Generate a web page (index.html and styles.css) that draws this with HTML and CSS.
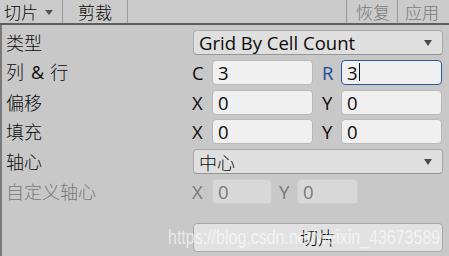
FILE: index.html
```html
<!DOCTYPE html>
<html>
<head>
<meta charset="utf-8">
<link rel="stylesheet" href="styles.css">
</head>
<body>
<div class="toolbar">
  <div class="tb-item tb-first">切片<span class="tb-caret"></span></div>
  <div class="tb-item">剪裁</div>
  <div class="tb-spacer"></div>
  <div class="tb-item tb-disabled">恢复</div>
  <div class="tb-item tb-disabled tb-last">应用</div>
</div>
<div class="panel">
  <div class="row">
    <div class="label">类型</div>
    <div class="content">
      <div class="dropdown"><span>Grid By Cell Count</span><span class="caret"></span></div>
    </div>
  </div>
  <div class="row">
    <div class="label">列<span class="amp">&amp;</span>行</div>
    <div class="content pair">
      <span class="axis">C</span><div class="field">3</div>
      <span class="axis axis2 blue">R</span><div class="field focus">3<span class="cursor"></span></div>
    </div>
  </div>
  <div class="row">
    <div class="label">偏移</div>
    <div class="content pair">
      <span class="axis">X</span><div class="field">0</div>
      <span class="axis axis2">Y</span><div class="field">0</div>
    </div>
  </div>
  <div class="row">
    <div class="label">填充</div>
    <div class="content pair">
      <span class="axis">X</span><div class="field">0</div>
      <span class="axis axis2">Y</span><div class="field">0</div>
    </div>
  </div>
  <div class="row">
    <div class="label">轴心</div>
    <div class="content">
      <div class="dropdown"><span class="cjk">中心</span><span class="caret"></span></div>
    </div>
  </div>
  <div class="row disabled">
    <div class="label">自定义轴心</div>
    <div class="content pair small">
      <span class="axis">X</span><div class="field">0</div>
      <span class="axis axis2">Y</span><div class="field">0</div>
    </div>
  </div>
  <div class="row button-row">
    <div class="label"></div>
    <div class="content">
      <div class="button">切片</div>
    </div>
  </div>
</div>
<div class="watermark">https://blog.csdn.net/weixin_43673589</div>
</body>
</html>
```

FILE: styles.css
```css
html, body {
  margin: 0;
  padding: 0;
}
body {
  width: 449px;
  height: 256px;
  overflow: hidden;
  background: #c8c8c8;
  font-family: "Open Sans", "Noto Sans CJK SC", sans-serif;
  color: #0c0c0c;
  position: relative;
}
.toolbar {
  display: flex;
  height: 23px;
  background: #cbcbcb;
  border-bottom: 2px solid #5e5e5e;
  font-family: "Noto Sans CJK SC", sans-serif;
  font-weight: 300;
  font-size: 17px;
  line-height: 23px;
}
.tb-item {
  display: flex;
  align-items: center;
  padding: 0 0 0 15px;
  width: 49px;
  border-right: 1px solid #9a9a9a;
  box-sizing: border-box;
}
.tb-first {
  width: 63px;
  padding-left: 4px;
}
.tb-item:nth-child(2) {
  width: 65px;
}
.tb-spacer {
  flex: 1;
  border-right: 1px solid #9a9a9a;
}
.tb-disabled {
  color: #7a7a7a;
  width: 51px;
  padding-left: 9px;
}
.tb-last {
  border-right: none;
  padding-left: 7px;
}
.tb-caret {
  display: inline-block;
  margin-left: 7px;
  margin-top: 2px;
  width: 0;
  height: 0;
  border-left: 4.5px solid transparent;
  border-right: 4.5px solid transparent;
  border-top: 5px solid #555;
}
.panel {
  border-left: 2px solid #7a7a7a;
  padding: 5px 0 0 4px;
  height: 226px;
  display: flex;
  flex-direction: column;
  gap: 4.8px;
}
.row {
  display: flex;
  height: 25px;
  align-items: center;
}
.label {
  flex: 0 0 184px;
  font-family: "Noto Sans CJK SC", sans-serif;
  font-weight: 300;
  font-size: 18px;
  line-height: 25px;
  white-space: pre;
}
.amp {
  font-family: "Open Sans", sans-serif;
  font-weight: 400;
  font-size: 18px;
  margin: 0 6px 0 7px;
}
.content {
  flex: 1;
  height: 25px;
  display: flex;
  align-items: center;
  padding-right: 6px;
}
.dropdown {
  flex: 1;
  margin-left: 3px;
  height: 25px;
  box-sizing: border-box;
  background: #dfdfdf;
  border: 1px solid #ababab;
  border-bottom-color: #959595;
  border-radius: 4px;
  display: flex;
  align-items: center;
  justify-content: space-between;
  padding: 0 10px 0 5px;
  font-size: 18.5px;
}
.dropdown .cjk {
  font-family: "Noto Sans CJK SC", sans-serif;
  font-weight: 300;
  font-size: 18px;
}
.caret {
  width: 0;
  height: 0;
  border-left: 4.5px solid transparent;
  border-right: 4.5px solid transparent;
  border-top: 6px solid #4a4a4a;
}
.pair {
  display: grid;
  grid-template-columns: 22px 101px 28px 101px;
  padding-right: 0;
}
.pair.small {
  grid-template-columns: 22px 60px 25px 61px;
}
.axis {
  font-size: 18.5px;
  line-height: 25px;
  padding-left: 2px;
}
.axis2 {
  padding-left: 9px;
}
.small .axis2 {
  padding-left: 7px;
}
.blue {
  color: #1a4c9c;
}
.field {
  height: 25px;
  box-sizing: border-box;
  background: #f0f0f0;
  border: 1px solid #b8b8b8;
  border-radius: 4px;
  font-size: 18.5px;
  line-height: 23px;
  padding-left: 5px;
  display: flex;
  align-items: center;
}
.field.focus {
  border: 1px solid #2a5a9c;
  border-radius: 4px;
}
.cursor {
  display: inline-block;
  width: 1px;
  height: 18px;
  background: #111;
  margin-left: 1px;
}
.disabled .label,
.disabled .axis,
.disabled .field {
  color: #787878;
}
.disabled .field {
  background: #d8d8d8;
  border-color: #cecece;
}
.button-row {
  margin-top: 14px;
  height: 29px;
}
.button-row .content {
  height: 29px;
}
.button {
  flex: 1;
  margin-left: 3px;
  height: 29px;
  box-sizing: border-box;
  background: #e2e2e2;
  border: 1px solid #a8a8a8;
  border-radius: 4px;
  font-family: "Noto Sans CJK SC", sans-serif;
  font-weight: 300;
  font-size: 18px;
  display: flex;
  align-items: center;
  justify-content: center;
}
.watermark {
  position: absolute;
  left: 168px;
  top: 226px;
  font-family: "Liberation Sans", sans-serif;
  font-size: 20px;
  color: rgba(255, 255, 255, 0.6);
  white-space: nowrap;
  transform: scaleX(0.8);
  transform-origin: left top;
}
```
